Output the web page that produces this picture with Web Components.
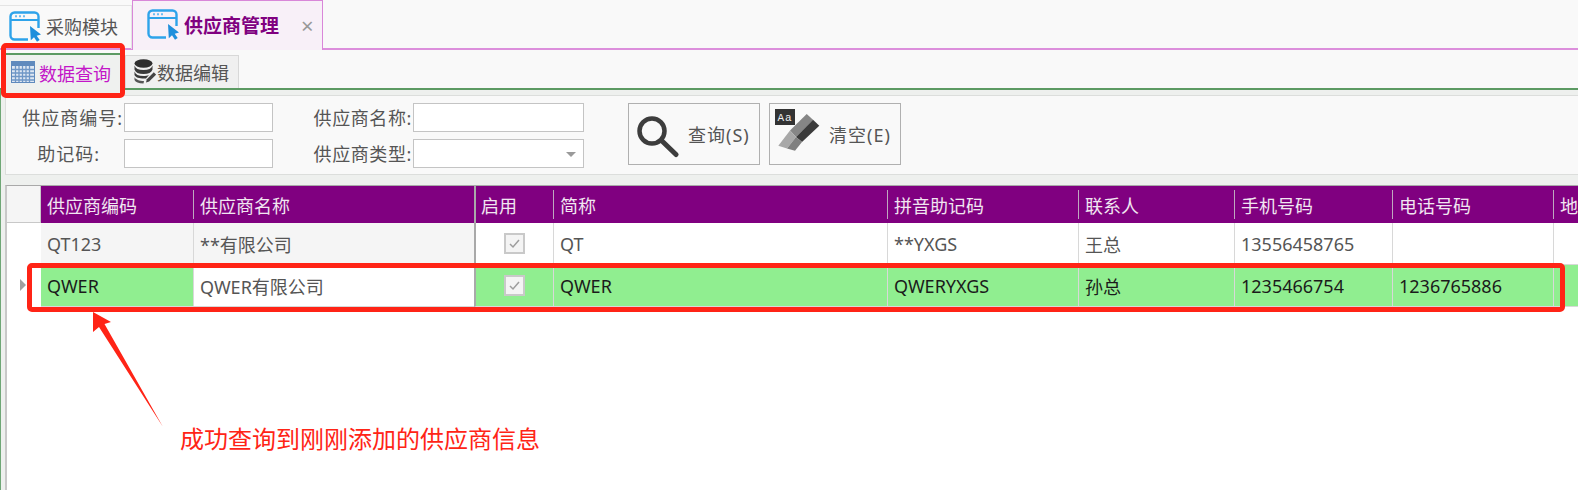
<!DOCTYPE html>
<html lang="zh">
<head>
<meta charset="utf-8">
<title>供应商管理</title>
<style>
  html, body { margin: 0; padding: 0; background: #fff; }
  body { font: 18px "Noto Sans", "Noto Sans CJK SC", sans-serif; color: #555; }
</style>
</head>
<body>
<supplier-app>
  <doc-tabs>
    <doc-tab>采购模块</doc-tab>
    <doc-tab active closable>供应商管理</doc-tab>
  </doc-tabs>
  <sub-tabs>
    <sub-tab icon="table" active>数据查询</sub-tab>
    <sub-tab icon="db">数据编辑</sub-tab>
  </sub-tabs>
  <work-area>
    <filter-panel>
      <filter-field slot="code" tail="1" spacing="1">供应商编号:</filter-field>
      <filter-field slot="name" tail="1" spacing="0.6">供应商名称:</filter-field>
      <filter-field slot="memo" tail="24" spacing="1">助记码:</filter-field>
      <filter-field slot="type" tail="1" spacing="0.6" select>供应商类型:</filter-field>
      <tool-button slot="search" icon="search">查询(S)</tool-button>
      <tool-button slot="clear" icon="eraser">清空(E)</tool-button>
    </filter-panel>
    <data-grid></data-grid>
  </work-area>
  <red-box style="left:1px;top:43px;width:124px;height:55px"></red-box>
  <red-box style="left:27px;top:263px;width:1538px;height:49px"></red-box>
  <red-arrow></red-arrow>
  <red-note>成功查询到刚刚添加的供应商信息</red-note>
</supplier-app>

<script>
const FONT = `"Noto Sans", "Noto Sans CJK SC", sans-serif`;

const windowIcon = /* html */`
  <svg width="33" height="31" viewBox="0 0 33 31" fill="none">
    <path d="M19 28.500H5.500a4 4 0 0 1-4-4V5.500a4 4 0 0 1 4-4h20a4 4 0 0 1 4 4V17" stroke="#2ea3ea" stroke-width="2.400"/>
    <path d="M2 9h27" stroke="#2ea3ea" stroke-width="2"/>
    <path d="M6 5.300h2M10 5.300h2M14 5.300h2" stroke="#6cbcf0" stroke-width="2"/>
    <path d="M21 15l11 8.500-4.300 1.200 3 4.300-2.700 1.800-3-4.500-3.200 3z" fill="#1f8fdc"/>
  </svg>`;

const icons = {
  table: /* html */`
    <svg width="24" height="22" viewBox="0 0 24 22">
      <rect width="24" height="22" fill="#5f8abd"/>
      <rect x="1" y="5" width="22" height="16" fill="#dfe8f3"/>
      <path d="M4.500 5v16M8 5v16M11.500 5v16M15 5v16M18.500 5v16M1 8.500h22M1 12h22M1 15.500h22M1 19h22" stroke="#6f97c6" stroke-width="1.300"/>
    </svg>`,
  db: /* html */`
    <svg width="22" height="25" viewBox="0 0 22 25">
      <ellipse cx="9.500" cy="4.500" rx="9" ry="4.200" fill="#2f2f2f"/>
      <path d="M.5 6.500c1 3 4 4.500 9 4.500s8-1.500 9-4.500v4c-1 3-4 4.500-9 4.500s-8-1.500-9-4.500z" fill="#3a3a3a"/>
      <path d="M.5 12.500c1 3 4 4.500 9 4.500 2 0 4-.3 5.500-1l-3 3.500c-5 .5-10.500-.8-11.500-3.500z" fill="#3a3a3a"/>
      <path d="M.5 18c1 2.500 5 4 9.500 4l-.5 2.500c-5 0-8-1.500-9-3.500z" fill="#555"/>
      <path d="M12 23.500l.8-3.300 7-7 2.400 2.400-7 7z" fill="#444"/>
    </svg>`,
  search: /* html */`
    <svg width="42" height="42" viewBox="0 0 42 42" fill="none">
      <circle cx="15" cy="15" r="12.500" stroke="#3d3d3d" stroke-width="4.500"/>
      <path d="M24.500 24.500l14.500 14" stroke="#3d3d3d" stroke-width="5" stroke-linecap="round"/>
    </svg>`,
  eraser: /* html */`
    <svg width="47" height="44" viewBox="0 0 47 44">
      <path d="M31.700 5L38 10.800 21 28 15 21.500z" fill="#868686"/>
      <path d="M38 10.800l6.300 5.900L27 33l-6-5z" fill="#3b3b3b"/>
      <path d="M15 21.500L21 28 12 39.500 3.300 36.700z" fill="#a8a8a8"/>
      <path d="M21 28l6 5-7 8.700-8-2.200z" fill="#7f7f7f"/>
      <rect width="20" height="16" fill="#333"/>
      <text x="10" y="12" font-size="11" font-family="Liberation Mono, monospace" fill="#eee" text-anchor="middle">Aa</text>
    </svg>`
};

class SupplierApp extends HTMLElement {
  constructor() { super(); this.attachShadow({ mode: "open" }); }
  connectedCallback() {
    this.shadowRoot.innerHTML = /* html */`
    <style>
      :host { display: flex; flex-direction: column; position: relative; width: 1578px; height: 490px;
              overflow: hidden; background: #f9f9f9; font-family: ${FONT}; }
    </style>
    <slot></slot>`;
  }
}

class DocTabs extends HTMLElement {
  constructor() { super(); this.attachShadow({ mode: "open" }); }
  connectedCallback() {
    this.shadowRoot.innerHTML = /* html */`
    <style>
      :host { display: flex; align-items: flex-end; height: 50px; box-sizing: border-box;
              border-bottom: 2px solid #dc8fdc; }
    </style>
    <slot></slot>`;
  }
}

class DocTab extends HTMLElement {
  constructor() { super(); this.attachShadow({ mode: "open" }); }
  connectedCallback() {
    const close = this.hasAttribute("closable") ? `<span class="close">×</span>` : "";
    this.shadowRoot.innerHTML = /* html */`
    <style>
      :host { display: flex; align-items: center; box-sizing: border-box; height: 44px; width: 132px;
              padding: 0 0 3px 9px; margin-bottom: -1px; color: #555; font-size: 18px; gap: 4px;
              border-top: 1px solid #e4e4e4; border-right: 1px solid #e4e4e4; }
      :host([active]) { height: 50px; width: 191px; padding: 0 0 2px 14px; margin-bottom: -2px; color: #800080;
              font-size: 19px; font-weight: 700; background: #f8f0f8; border: 1px solid #d987d9; border-bottom: 0; }
      svg { flex: none; margin-top: 1px; }
      :host([active]) svg { margin-top: 0; }
      .close { margin-left: 18px; color: #999; font-weight: 400; font-size: 22px; line-height: 1; }
    </style>
    ${windowIcon}<slot></slot>${close}`;
  }
}

class SubTabs extends HTMLElement {
  constructor() { super(); this.attachShadow({ mode: "open" }); }
  connectedCallback() {
    this.shadowRoot.innerHTML = /* html */`
    <style>
      :host { display: flex; align-items: flex-end; box-sizing: border-box; height: 40px; padding-left: 4px;
              border-bottom: 2px solid #5c9a63; }
    </style>
    <slot></slot>`;
  }
}

class SubTab extends HTMLElement {
  constructor() { super(); this.attachShadow({ mode: "open" }); }
  connectedCallback() {
    this.shadowRoot.innerHTML = /* html */`
    <style>
      :host { display: flex; align-items: center; gap: 1px; box-sizing: border-box; height: 33px; width: 114px;
              padding-left: 8px; margin-bottom: 0; color: #555; background: #f0f0f0; font-size: 18px;
              border: 1px solid #d8d8d8; border-bottom: 0; }
      :host([active]) { gap: 4px; width: 121px; height: 37px; padding-left: 7px; margin-bottom: -2px; color: #c316c8;
              background: #eff1ef; border: 0; border-top: 2px solid #5c9a63; }
      svg { flex: none; margin-top: -2px; }
    </style>
    ${icons[this.getAttribute("icon")]}<slot></slot>`;
  }
}

class WorkArea extends HTMLElement {
  constructor() { super(); this.attachShadow({ mode: "open" }); }
  connectedCallback() {
    this.shadowRoot.innerHTML = /* html */`
    <style>
      :host { display: flex; flex-direction: column; flex: 1; gap: 10px; min-height: 0; box-sizing: border-box;
              padding: 5px 0 0 4px; background: #eef0ee; border-left: 1px solid #6fa776; }
    </style>
    <slot></slot>`;
  }
}

class FilterPanel extends HTMLElement {
  constructor() { super(); this.attachShadow({ mode: "open" }); }
  connectedCallback() {
    this.shadowRoot.innerHTML = /* html */`
    <style>
      :host { display: flex; box-sizing: border-box; height: 80px; padding: 7px 0 0 0; background: #f9f9f9;
              border: 1px solid #dcdedc; border-right: 0; }
      .fields { display: grid; grid-template-columns: 267px 311px; row-gap: 7px; height: 65px; }
      .actions { display: flex; gap: 9px; margin-left: 44px; align-items: flex-start; }
    </style>
    <div class="fields">
      <slot name="code"></slot><slot name="name"></slot>
      <slot name="memo"></slot><slot name="type"></slot>
    </div>
    <div class="actions"><slot name="search"></slot><slot name="clear"></slot></div>`;
  }
}

class FilterField extends HTMLElement {
  constructor() { super(); this.attachShadow({ mode: "open" }); }
  connectedCallback() {
    const caret = this.hasAttribute("select") ? `<i class="caret"></i>` : "";
    this.shadowRoot.innerHTML = /* html */`
    <style>
      :host { display: flex; justify-content: flex-end; align-items: center; height: 29px; color: #555;
              font-size: 18px; white-space: nowrap; }
      .label { padding-right: ${this.getAttribute("tail")}px; position: relative; top: 1px; line-height: 29px;
               letter-spacing: ${this.getAttribute("spacing")}px; }
      .box { position: relative; box-sizing: border-box; width: ${this.hasAttribute("select") || this.slot === "name" ? 171 : 149}px;
             height: 29px; background: #fff; border: 1px solid #c4c4c4; flex: none; }
      .caret { position: absolute; right: 7px; top: 12px; border: 5px solid transparent; border-top: 5px solid #9a9a9a; border-bottom: 0; }
    </style>
    <span class="label"><slot></slot></span><div class="box">${caret}</div>`;
  }
}

class ToolButton extends HTMLElement {
  constructor() { super(); this.attachShadow({ mode: "open" }); }
  connectedCallback() {
    const search = this.getAttribute("icon") === "search";
    this.shadowRoot.innerHTML = /* html */`
    <style>
      :host { display: flex; align-items: center; box-sizing: border-box; width: 132px; height: 62px;
              padding-left: ${search ? 8 : 5}px; gap: ${search ? 9 : 7}px; color: #555; font-size: 18px;
              background: #f9f9f9; border: 1px solid #b0b0b0; white-space: nowrap; letter-spacing: 1px; }
      svg { flex: none; margin-top: ${search ? 6 : -6}px; }
    </style>
    ${icons[this.getAttribute("icon")]}<span><slot></slot></span>`;
  }
}

class DataGrid extends HTMLElement {
  constructor() { super(); this.attachShadow({ mode: "open" }); }

  static get columns() {
    return [
      ["供应商编码", 153], ["供应商名称", 280], ["启用", 80], ["简称", 334], ["拼音助记码", 191],
      ["联系人", 156], ["手机号码", 158], ["电话号码", 161], ["地", 120]
    ];
  }

  static get rows() {
    return [
      ["QT123", "**有限公司", true, "QT", "**YXGS", "王总", "13556458765", "", ""],
      ["QWER", "QWER有限公司", true, "QWER", "QWERYXGS", "孙总", "1235466754", "1236765886", ""]
    ];
  }

  connectedCallback() {
    const cols = DataGrid.columns;
    const head = cols.map(([t], i) => `<div class="th ${i === 2 ? "after-freeze" : ""}"><span>${t}</span></div>`).join("");
    const rows = DataGrid.rows.map((r, n) => {
      const cells = r.map((v, i) => {
        const kind = i === 2 ? "check after-freeze" : "";
        const freeze = i === 1 ? "freeze" : "";
        const fixed = i < 2 ? "fixed" : "";
        const body = i === 2 ? `<i class="box"><svg width="13" height="11" viewBox="0 0 13 11"><path d="M2 6l3 3 6-7" fill="none" stroke="#9d9d9d" stroke-width="1.500"/></svg></i>` : v;
        return `<div class="td ${kind} ${freeze} ${fixed}">${body}</div>`;
      }).join("");
      return `<div class="row ${n === 1 ? "current" : ""}"><div class="rh">${n === 1 ? `<i class="mark"></i>` : ""}</div>${cells}</div>`;
    }).join("");
    this.shadowRoot.innerHTML = /* html */`
    <style>
      :host { display: block; flex: 1; box-sizing: border-box; background: #fff; font-size: 18px;
              border-left: 2px solid #c8c8c8; border-top: 1px solid #a9a9a9; }
      .row { display: grid; grid-template-columns: 34px ${cols.map(c => c[1] + "px").join(" ")}; width: max-content; height: 42px; }
      .head { height: 37px; background: #800080; }
      .rh { background: #fff; position: relative; }
      .head .rh { background: #f5f5f5; border-right: 1px solid #c8c8c8; border-bottom: 1px solid #c8c8c8; }
      .th { display: flex; align-items: center; box-sizing: border-box; padding-left: 6px; color: #f1e6f1; white-space: nowrap;
            position: relative; }
      .th::after { content: ""; position: absolute; right: 0; top: 4px; bottom: 4px; width: 1px; background: #bfa8bf; }
      .th:nth-child(3)::after { display: none; }
      .th.after-freeze { padding-left: 5px; border-left: 2px solid #a9a9a9; }
      .td { display: flex; align-items: center; box-sizing: border-box; padding-left: 6px; color: #555; white-space: nowrap;
            background: #fff; border-right: 1px solid #d8d8d8; border-bottom: 1px solid #d8d8d8; }
      .td.fixed { background: #f5f5f5; }
      .td.freeze { border-right: 0; }
      .td.after-freeze { border-left: 2px solid #a9a9a9; }
      .td.check { justify-content: center; padding-left: 0; }
      .box { display: flex; align-items: center; justify-content: center; box-sizing: border-box; width: 21px; height: 21px;
             background: #f4f4f4; border: 2px solid #c9c9c9; }
      .current .td { background: #90ee90; color: #1b1b1b; }
      .current .td.freeze { background: #fff; color: #555; }
      .mark { position: absolute; left: 13px; top: 14px; border: 6px solid transparent; border-left: 6px solid #a0a0a0; border-right: 0; }
    </style>
    <div class="row head"><div class="rh"></div>${head}</div>
    ${rows}`;
  }
}

class RedBox extends HTMLElement {
  constructor() { super(); this.attachShadow({ mode: "open" }); }
  connectedCallback() {
    this.shadowRoot.innerHTML = /* html */`
    <style>
      :host { position: absolute; box-sizing: border-box; border: 5px solid #ff2416; border-radius: 5px; }
    </style>`;
  }
}

class RedArrow extends HTMLElement {
  constructor() { super(); this.attachShadow({ mode: "open" }); }
  connectedCallback() {
    this.shadowRoot.innerHTML = /* html */`
    <style>
      :host { position: absolute; left: 90px; top: 309px; width: 80px; height: 122px; }
      svg { display: block; }
    </style>
    <svg width="80" height="122" viewBox="0 0 80 122">
      <path d="M3 3 L21 13 L14.500 15 L73 118 L9 18 L3 23 Z" fill="#ff2416"/>
    </svg>`;
  }
}

class RedNote extends HTMLElement {
  constructor() { super(); this.attachShadow({ mode: "open" }); }
  connectedCallback() {
    this.shadowRoot.innerHTML = /* html */`
    <style>
      :host { position: absolute; left: 180px; top: 422px; color: #ff2416; font-size: 24px; line-height: 34px; white-space: nowrap; }
    </style>
    <slot></slot>`;
  }
}

customElements.define("supplier-app", SupplierApp);
customElements.define("doc-tabs", DocTabs);
customElements.define("doc-tab", DocTab);
customElements.define("sub-tabs", SubTabs);
customElements.define("sub-tab", SubTab);
customElements.define("work-area", WorkArea);
customElements.define("filter-panel", FilterPanel);
customElements.define("filter-field", FilterField);
customElements.define("tool-button", ToolButton);
customElements.define("data-grid", DataGrid);
customElements.define("red-box", RedBox);
customElements.define("red-arrow", RedArrow);
customElements.define("red-note", RedNote);
</script>
</body>
</html>
